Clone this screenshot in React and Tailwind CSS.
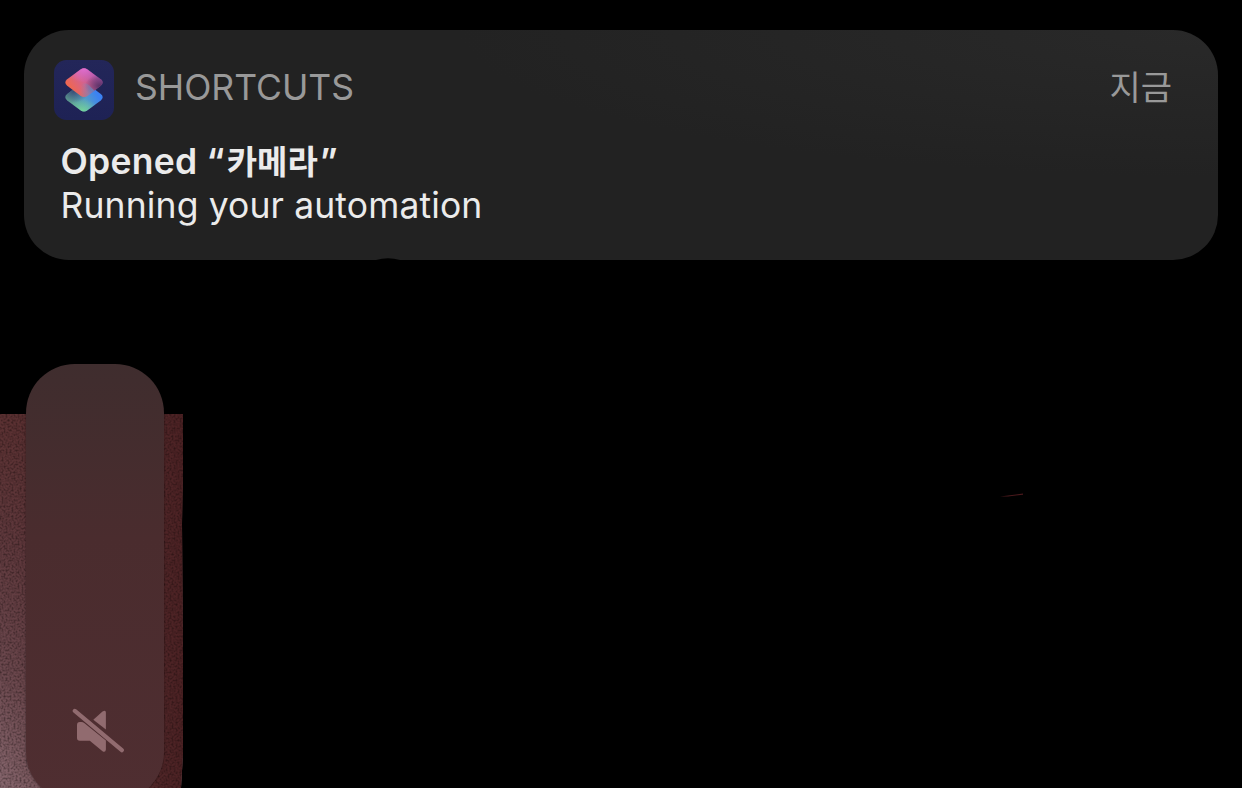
function ShortcutsIcon() {
  return (
    <svg className="size-15 shrink-0" viewBox="0 0 60 60" aria-hidden="true">
      <defs>
        <linearGradient id="tile" x1="0" y1="0" x2="0" y2="1">
          <stop offset="0" stopColor="#232659" />
          <stop offset="1" stopColor="#1e2255" />
        </linearGradient>
        <linearGradient id="lower" x1="0.15" y1="0.7" x2="0.85" y2="0.4">
          <stop offset="0" stopColor="#5f9f92" />
          <stop offset="0.5" stopColor="#559dc4" />
          <stop offset="1" stopColor="#3b82f2" />
        </linearGradient>
        <radialGradient id="lowerShade" cx="0.22" cy="0.3" r="0.4">
          <stop offset="0" stopColor="#35406c" stopOpacity="0.85" />
          <stop offset="1" stopColor="#35406c" stopOpacity="0" />
        </radialGradient>
        <radialGradient id="lowerGlow" cx="0.45" cy="1" r="0.45">
          <stop offset="0" stopColor="#78dc9a" stopOpacity="0.9" />
          <stop offset="1" stopColor="#78dc9a" stopOpacity="0" />
        </radialGradient>
        <linearGradient id="upper" x1="0.15" y1="0.7" x2="0.85" y2="0.3">
          <stop offset="0" stopColor="#ee6752" />
          <stop offset="0.5" stopColor="#d4628f" />
          <stop offset="1" stopColor="#a653a0" />
        </linearGradient>
        <radialGradient id="upperGlow" cx="0.5" cy="0" r="0.5">
          <stop offset="0" stopColor="#e36fd4" stopOpacity="0.95" />
          <stop offset="1" stopColor="#e36fd4" stopOpacity="0" />
        </radialGradient>
        <radialGradient id="upperShade" cx="0.92" cy="0.62" r="0.4">
          <stop offset="0" stopColor="#4a2c5e" stopOpacity="0.85" />
          <stop offset="1" stopColor="#4a2c5e" stopOpacity="0" />
        </radialGradient>
        <linearGradient id="fold" x1="0" y1="0" x2="1" y2="0.2">
          <stop offset="0.2" stopColor="#7d8bb0" stopOpacity="0" />
          <stop offset="1" stopColor="#6088c4" stopOpacity="0.85" />
        </linearGradient>
        <path
          id="diamond"
          d="M26.500 9.400 Q30 6.900 33.500 9.400 L46.800 19.300 Q50.600 22.500 46.800 25.800 L33.500 35.700 Q30 38.200 26.500 35.700 L13.200 25.800 Q9.400 22.500 13.200 19.300 Z"
        />
      </defs>
      <rect width="60" height="60" rx="12.5" fill="url(#tile)" />
      <g transform="translate(0 14.600)">
        <use href="#diamond" fill="url(#lower)" />
        <use href="#diamond" fill="url(#lowerGlow)" />
        <use href="#diamond" fill="url(#lowerShade)" />
      </g>
      <use href="#diamond" fill="url(#upper)" />
      <use href="#diamond" fill="url(#upperGlow)" />
      <use href="#diamond" fill="url(#upperShade)" />
      <path d="M24 27 Q30 20.800 35 25.200 L40.200 30.600 L33.500 35.700 Q30 38.200 26.500 35.700 Z" fill="url(#fold)" />
    </svg>
  );
}

function MutedIcon() {
  return (
    <svg className="h-[46px] w-[52px]" viewBox="0 0 52 46" fill="#916b6f" aria-hidden="true">
      <path d="M21.300 11.800 L30.500 3.600 Q33.900 1.300 33.900 4.800 V21.600 Z" />
      <path d="M7.800 14 H9.500 Q11 14 12.200 15 L33.900 32.400 V41.500 Q33.500 45 30.500 43.300 L17.800 32.800 H7.800 Q5 32.800 5 30 V17 Q5 14 7.800 14 Z" />
      <path d="M2.800 2.900 L49.800 42.200" stroke="#916b6f" strokeWidth="4.200" strokeLinecap="round" />
    </svg>
  );
}

// Grainy photo showing behind the volume slider
function Backdrop() {
  return (
    <svg className="absolute top-[414px] left-0 h-[374px] w-[184px]" viewBox="0 0 184 374" aria-hidden="true">
      <defs>
        <linearGradient id="photo" x1="0" y1="0" x2="0" y2="1">
          <stop offset="0" stopColor="#5a3031" />
          <stop offset="0.35" stopColor="#5f393d" />
          <stop offset="0.7" stopColor="#6c494f" />
          <stop offset="1" stopColor="#87676e" />
        </linearGradient>
        <linearGradient id="photoEdge" x1="0" y1="0" x2="1" y2="0">
          <stop offset="0" stopColor="#502729" stopOpacity="0" />
          <stop offset="0.85" stopColor="#502628" />
          <stop offset="1" stopColor="#4b2123" />
        </linearGradient>
        <filter id="grain" x="0" y="0" width="1" height="1" colorInterpolationFilters="sRGB">
          <feTurbulence type="fractalNoise" baseFrequency="0.5" numOctaves="2" seed="4" />
          <feColorMatrix values="0 0 0 0 0.05  0 0 0 0 0.02  0 0 0 0 0.02  1 0 0 0 -0.4" />
          <feComposite in2="SourceGraphic" operator="in" />
        </filter>
      </defs>
      <path d="M0 0 H183 V55 L182 110 L183 240 V340 L181 374 H0 Z" fill="url(#photo)" />
      <path d="M0 0 H183 V55 L182 110 L183 240 V340 L181 374 H0 Z" fill="url(#photoEdge)" />
      <path d="M0 0 H183 V55 L182 110 L183 240 V340 L181 374 H0 Z" filter="url(#grain)" />
    </svg>
  );
}

function Notification() {
  return (
    <section className="relative h-[230px] rounded-[45px] bg-[#222222] bg-radial-[at_100%_0%] from-[#292929] to-[#222222] to-45% px-[30px] pt-[30px]">
      <header className="flex h-15 items-center justify-between pr-4">
        <div className="flex items-center gap-[21px]">
          <ShortcutsIcon />
          <span className="mt-[-4px] text-[35.5px] leading-[44px] text-[#999999]">SHORTCUTS</span>
        </div>
        <time className="mt-[-4px] text-[34px] leading-[44px] text-[#999999]">지금</time>
      </header>
      <div className="mt-[20px] pl-[6.5px] text-[35.5px] leading-[44px] text-[#ebebeb]">
        <p className="h-[44px] font-semibold tracking-[0.25px]">
          Opened “<span className="ml-[2px] text-[33px] tracking-normal">카메라</span>
          <span className="ml-[2px]">”</span>
        </p>
        <p className="tracking-[0.13px]">Running your automation</p>
      </div>
      <svg className="absolute bottom-0 left-[352px] h-[2px] w-[24px]" viewBox="0 0 24 2" aria-hidden="true">
        <path d="M0 2 Q12 -1.500 24 2 Z" fill="#000" />
      </svg>
    </section>
  );
}

function VolumeSlider() {
  return (
    <div className="relative mt-[104px] ml-[2px] flex h-[437px] w-[138px] flex-col items-center justify-end rounded-[49px] bg-linear-to-b from-[#3f2d2e] via-[#4a2c2e] via-40% to-[#4f2e31] pb-[47px] pl-[6px] shadow-[0_0_2px_rgba(0,0,0,0.5)]">
      <MutedIcon />
    </div>
  );
}

export default function App() {
  return (
    <main className="relative h-[788px] w-[1242px] overflow-hidden bg-black px-6 pt-[30px] font-['Inter','Noto_Sans_CJK_KR',sans-serif]">
      <Backdrop />
      <Notification />
      <VolumeSlider />
      <svg className="absolute top-[492px] left-[1000px] h-[6px] w-[24px]" viewBox="0 0 24 6" aria-hidden="true">
        <path d="M0 4.500 L23 1.500 V2.800 L8 4.500 Z" fill="#4b191c" />
      </svg>
    </main>
  );
}
